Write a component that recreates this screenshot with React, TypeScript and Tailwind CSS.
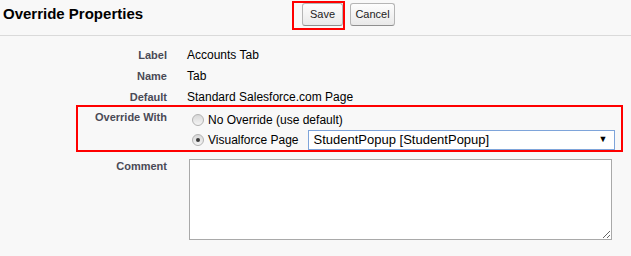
import React from "react";

const fields = [
  { label: "Label", value: "Accounts Tab" },
  { label: "Name", value: "Tab" },
  { label: "Default", value: "Standard Salesforce.com Page" },
];

function Radio({ checked }: { checked?: boolean }) {
  return (
    <span className="w-[12px] h-[12px] rounded-full border border-[#b3b3b3] bg-gradient-to-b from-[#d8d8d8] to-[#f4f4f4] flex items-center justify-center shrink-0">
      {checked && <span className="w-[4px] h-[4px] rounded-full bg-[#3a3a3a]" />}
    </span>
  );
}

export default function App() {
  return (
    <div className="relative w-[631px] h-[256px] bg-[#f8f8f8] font-['Arial','Liberation_Sans',sans-serif] text-black overflow-hidden">
      {/* Header with buttons */}
      <div className="h-[36px] flex items-start border-b border-[#dadada]">
        <h2 className="w-[302px] pl-[3px] pt-[5px] text-[15px] leading-[18px] font-bold text-black">
          Override Properties
        </h2>
        <div className="flex gap-[7px] pt-[3px]">
          <button className="w-[41px] h-[23px] rounded-[3px] border border-[#b5b5b5] border-b-[#8f8f8f] bg-gradient-to-b from-[#fdfdfd] to-[#e9e9e9] text-[11px] text-[#222]">
            Save
          </button>
          <button className="w-[45px] h-[23px] rounded-[3px] border border-[#b5b5b5] border-b-[#8f8f8f] bg-gradient-to-b from-[#fdfdfd] to-[#e9e9e9] text-[11px] text-[#222]">
            Cancel
          </button>
        </div>
      </div>
      {/* annotation around Save */}
      <div className="absolute left-[292px] top-[1px] w-[53px] h-[29px] border-2 border-[#ff0000]" />

      {/* Detail rows */}
      <div className="pt-[12px] flex flex-col gap-[6px]">
        {fields.map((f) => (
          <div key={f.label} className="flex items-center h-[15px]">
            <div className="w-[167px] text-right text-[11px] font-bold text-[#4a4a56]">
              {f.label}
            </div>
            <div className="pl-[20px] text-[12px] leading-[15px]">{f.value}</div>
          </div>
        ))}
      </div>

      {/* Override With (annotated) */}
      <div className="ml-[76px] w-[547px] h-[47px] border-2 border-[#ff0000] flex">
        <div className="w-[89px] pt-[4px] text-right text-[11px] leading-[13px] font-bold text-[#4a4a56]">
          Override With
        </div>
        <div className="pl-[25px] pt-[3px] flex flex-col">
          <div className="flex items-center gap-[4px] h-[21px] text-[12px]">
            <Radio />
            No Override (use default)
          </div>
          <div className="flex items-center gap-[4px] h-[20px] text-[12px]">
            <Radio checked />
            <span>Visualforce Page</span>
            <div className="ml-[5px] w-[307px] h-[20px] border border-[#7ea4da] bg-white flex items-center justify-between pl-[5px] pr-[6px]">
              <span className="text-[13px]">StudentPopup [StudentPopup]</span>
              <span className="text-[9px] text-black">▼</span>
            </div>
          </div>
        </div>
      </div>

      {/* Comment */}
      <div className="flex pt-[7px]">
        <div className="w-[167px] pt-[1px] text-right text-[11px] leading-[13px] font-bold text-[#4a4a56]">
          Comment
        </div>
        <textarea className="ml-[22px] w-[423px] h-[81px] bg-white border border-[#a9a9a9] resize" />
      </div>
    </div>
  );
}
